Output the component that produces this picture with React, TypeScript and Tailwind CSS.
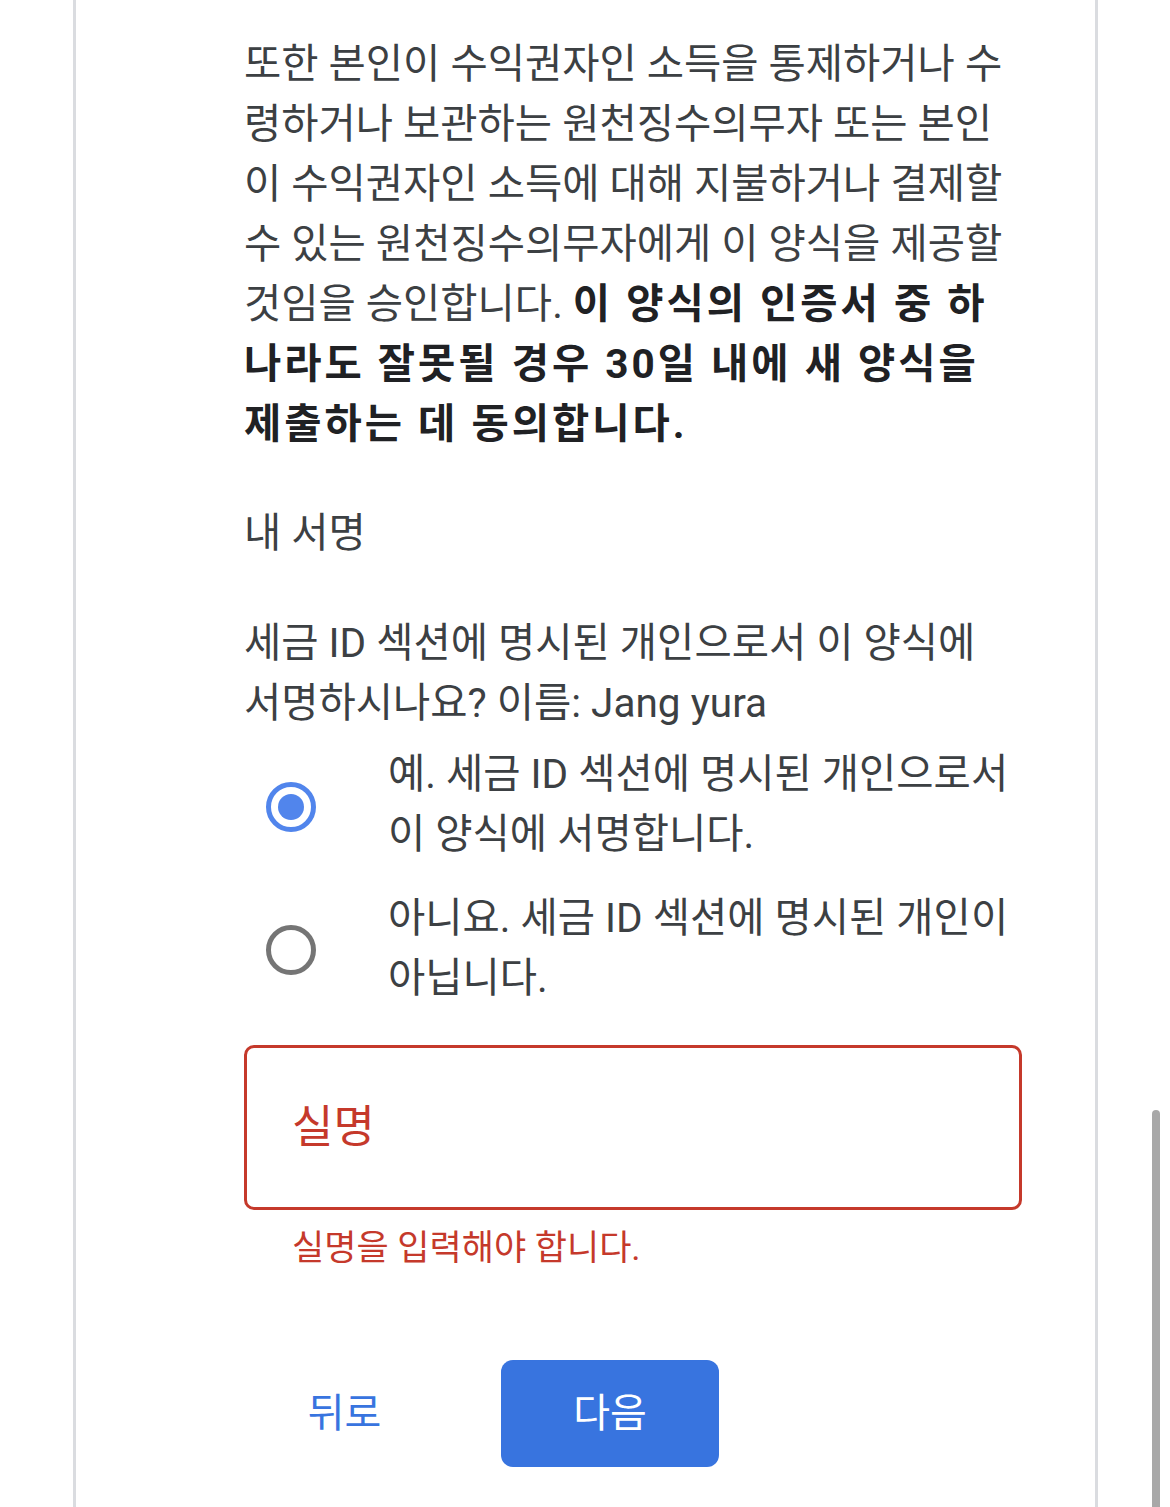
import { useState } from 'react';

const font = { fontFamily: 'Roboto, "Noto Sans CJK KR", sans-serif' };

function Radio({ checked }: { checked: boolean }) {
  return (
    <span
      className={`flex items-center justify-center w-[50px] h-[50px] rounded-full border-[5px] shrink-0 ${
        checked ? 'border-[#5185ec]' : 'border-[#757575]'
      }`}
    >
      {checked && <span className="w-[26px] h-[26px] rounded-full bg-[#5185ec]" />}
    </span>
  );
}

export default function App() {
  const [choice, setChoice] = useState<'yes' | 'no'>('yes');

  return (
    <div className="relative bg-white min-h-[1507px] overflow-hidden" style={font}>
      <div className="ml-[73px] w-[1025px] min-h-[1507px] border-x-[3px] border-[#dadce0] pt-[34px] pl-[168px] pr-[72px]">
        <p className="text-[40.5px] leading-[60px] text-[#3c4043]">
          또한 본인이 수익권자인 소득을 통제하거나 수령하거나 보관하는 원천징수의무자 또는 본인이 수익권자인 소득에
          대해 지불하거나 결제할 수 있는 원천징수의무자에게 이 양식을 제공할 것임을 승인합니다.{' '}
          <b className="font-bold text-[#202124] tracking-[3px]">
            이 양식의 인증서 중 하나라도 잘못될 경우 30일 내에 새 양식을 제출하는 데 동의합니다.
          </b>
        </p>

        <h2 className="mt-[49px] text-[40.5px] leading-[60px] text-[#3c4043]">내 서명</h2>

        <p className="mt-[50px] text-[40.5px] leading-[60px] text-[#3c4043] break-keep">
          세금 ID 섹션에 명시된 개인으로서 이 양식에 서명하시나요? 이름: Jang yura
        </p>

        <div className="mt-[11px] flex flex-col gap-[24px] break-keep">
          <label className="flex items-center cursor-pointer" onClick={() => setChoice('yes')}>
            <span className="w-[144px] shrink-0 flex pl-[22px] pt-[6px]">
              <Radio checked={choice === 'yes'} />
            </span>
            <span className="text-[40.5px] leading-[60px] text-[#3c4043]">
              예. 세금 ID 섹션에 명시된 개인으로서 이 양식에 서명합니다.
            </span>
          </label>
          <label className="flex items-center cursor-pointer" onClick={() => setChoice('no')}>
            <span className="w-[144px] shrink-0 flex pl-[22px] pt-[4px]">
              <Radio checked={choice === 'no'} />
            </span>
            <span className="text-[40.5px] leading-[60px] text-[#3c4043]">
              아니요. 세금 ID 섹션에 명시된 개인이 아닙니다.
            </span>
          </label>
        </div>

        <div className="mt-[37px] h-[165px] w-[778px] rounded-[10px] border-[3px] border-[#c5392b] flex items-center pl-[45px]">
          <span className="text-[45px] text-[#c5392b] pt-[1px]">실명</span>
        </div>
        <p className="mt-[19px] pl-[48px] text-[35px] leading-[40px] text-[#c5392b]">실명을 입력해야 합니다.</p>

        <div className="mt-[91px] flex items-center">
          <button className="w-[201px] h-[107px] text-[40px] text-[#3874df]">뒤로</button>
          <button className="ml-[56px] w-[218px] h-[107px] rounded-[12px] bg-[#3874df] text-[40px] text-white">
            다음
          </button>
        </div>
      </div>

      <div className="absolute right-[10px] top-[1110px] bottom-0 w-[8px] rounded-t-full bg-[#a8a8a8]" />
    </div>
  );
}
